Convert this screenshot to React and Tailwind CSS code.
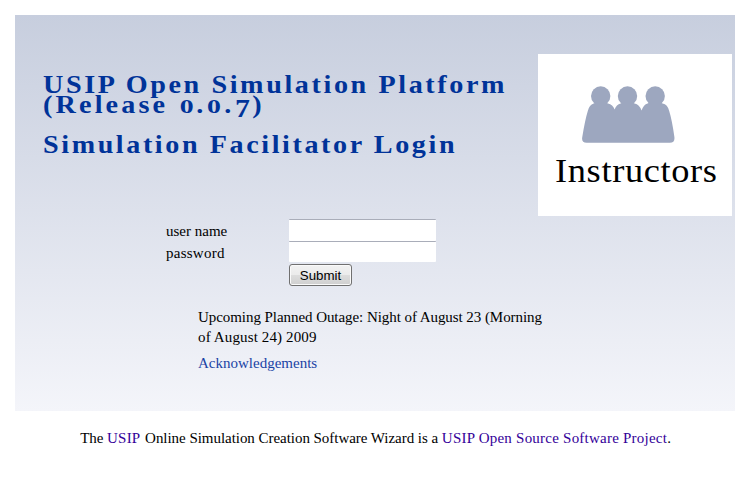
function PeopleIcon() {
  return (
    <svg width="94" height="58" viewBox="0 0 94 58" fill="#9da7bf" aria-hidden="true">
      <circle cx="18.700" cy="10" r="9.700" />
      <circle cx="45.500" cy="10" r="9.700" />
      <circle cx="73.200" cy="10" r="9.700" />
      <path d="M13 15h12q-1 2.200 1 2.600q4.800 1 6.600 6q1.800-4.800 6-6q2-.5 1-2.600h12q-1 2.200 1 2.600q4.800 1 7 7q2-6 6-7q2-.5 1-2.600h13q-1 2.200 1 2.600q5 1 6.600 7.400Q90 34 92.400 51q.7 5.800-4.600 5.800H4.600Q-.6 56.800.2 51.500Q3 34 5.800 25q1.600-6.200 5.800-7.400q2.200-.5 1.400-2.600z" />
    </svg>
  );
}

function OldStyleZero() {
  return <span className="mr-[4.5px] ml-[2.5px] inline-block scale-x-[1.35] text-[19px] leading-[0] tracking-normal">0</span>;
}

export default function App() {
  return (
    <div className="h-[479px] w-[751px] overflow-hidden bg-white p-[15px] font-['Liberation_Serif',serif] text-[15px] text-black">
      <main className="flex h-[396px] w-[720px] flex-col bg-gradient-to-b from-[#c7cede] to-[#f4f5fa]">
        <div className="flex h-[204px] items-start justify-between pt-[39px] pr-[3px] pl-7">
          <header className="w-[440px] pt-[21px] text-[26px] leading-5 font-bold whitespace-nowrap text-[#003399]">
            <h1 className="origin-left scale-x-[1.083] tracking-[2.4px]">
              <span className="block h-5">USIP Open Simulation Platform</span>
              <span className="block h-5 tracking-[2.9px]">
                (Release <OldStyleZero />.<OldStyleZero />.
                <span className="relative top-[4px] ml-px inline-block scale-x-[1.1] text-[25px] leading-[0]">7</span>)
              </span>
            </h1>
            <h2 className="mt-5 origin-left scale-x-[1.081] tracking-[2.4px]">Simulation Facilitator Login</h2>
          </header>
          <div className="flex h-[162px] w-[194px] shrink-0 flex-col bg-white pt-8">
            <div className="pl-11">
              <PeopleIcon />
            </div>
            <div className="pt-[9px] pl-[17px] text-[34px] leading-9">
              <span className="inline-block origin-left scale-x-[1.07] tracking-[0.6px]">Instructors</span>
            </div>
          </div>
        </div>
        <form className="grid w-fit grid-cols-[123px_148px] pl-[151px]" onSubmit={(e) => e.preventDefault()}>
          <label htmlFor="user" className="h-[22px] leading-6">user name</label>
          <input id="user" className="h-[22px] w-[147px] rounded-[1px] border-t border-[#a9adb9] bg-white px-1 outline-none" />
          <label htmlFor="pass" className="h-[22px] leading-6 tracking-[0.25px]">password</label>
          <input id="pass" type="password" className="h-[21px] w-[147px] rounded-[1px] border-t border-[#a9adb9] bg-white px-1 outline-none" />
          <button className="col-start-2 mt-px h-[22px] w-[63px] rounded-[3px] border border-[#707070] bg-[linear-gradient(#f2f2f2_0%,#ebebeb_50%,#dddddd_50%,#cfcfcf_100%)] pt-px font-['Liberation_Sans',sans-serif] text-[13.3px] leading-5 shadow-[inset_0_0_0_1px_#fafafa]">
            Submit
          </button>
        </form>
        <section className="pt-[21px] pl-[183px] leading-5">
          <p>
            <span className="block tracking-[-0.06px]">Upcoming Planned Outage: Night of August 23 (Morning</span>
            <span className="block tracking-[0.13px]">of August 24) 2009</span>
          </p>
          <a href="#" className="mt-1.5 block w-fit text-[#1a43a5]">Acknowledgements</a>
        </section>
      </main>
      <footer className="pt-[17px] text-center leading-5 tracking-[-0.04px] whitespace-nowrap">
        The <a href="#" className="mr-px tracking-[0.2px] text-[#330099]">USIP</a> Online Simulation Creation Software Wizard is a{" "}
        <a href="#" className="tracking-[0.23px] text-[#330099]">USIP Open Source Software Project</a>.
      </footer>
    </div>
  );
}
